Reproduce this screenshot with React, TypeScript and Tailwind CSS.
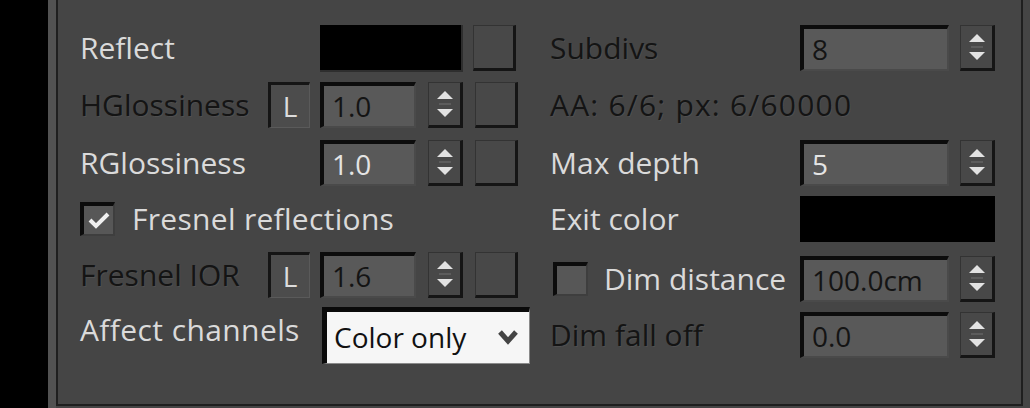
import React from "react";

// Enabled and disabled label styles, 3ds Max dark theme
const LIGHT = "text-[#dadada]";
const DIM = "text-[#141414] [text-shadow:1px_1px_0_rgba(255,255,255,0.06)]";

function Spinner() {
    return (
        <div className="w-[35px] h-[46px] flex flex-col items-center justify-center gap-[3px] border-l border-t border-[#333] border-r-[3px] border-b-[3px] border-r-[#151515] border-b-[#151515] bg-[#484848]">
            <svg width="18" height="10" viewBox="0 0 18 10">
                <polygon points="9,1 17,9 1,9" fill="#e2e2e2" />
            </svg>
            <div className="w-[12px] h-[2px] bg-[#5c5c5c]" />
            <svg width="18" height="10" viewBox="0 0 18 10">
                <polygon points="1,1 17,1 9,9" fill="#e2e2e2" />
            </svg>
        </div>
    );
}

function Field({ value, dim, w = "w-[96px]" }: { value: string; dim?: boolean; w?: string }) {
    return (
        <div
            className={`${w} h-[46px] flex items-center pl-[8px] bg-[#595959] border-t-[4px] border-l-[4px] border-[#0c0c0c] border-r-2 border-b-2 border-r-[#4a4a4a] border-b-[#4a4a4a] text-[28px] leading-none ${dim ? "text-[#141414]" : "text-[#e4e4e4]"}`}
        >
            {value}
        </div>
    );
}

function MapButton() {
    return <div className="w-[43px] h-[46px] bg-[#484848] border-l border-t border-[#333] border-r-[3px] border-b-[3px] border-r-[#151515] border-b-[#151515]" />;
}

function LButton() {
    return (
        <div className="w-[42px] h-[46px] flex items-center justify-center bg-[#4c4c4c] border-t-[3px] border-l-[3px] border-[#151515] border-r border-b border-r-[#5a5a5a] border-b-[#5a5a5a] text-[28px] leading-none text-[#dcdcdc]">
            L
        </div>
    );
}

function CheckBox({ checked }: { checked?: boolean }) {
    return (
        <div className="w-[35px] h-[34px] flex items-center justify-center bg-[#575757] border-t-[4px] border-l-[4px] border-[#0c0c0c] border-r-2 border-b-2 border-r-[#3e3e3e] border-b-[#3e3e3e]">
            {checked && (
                <svg width="22" height="18" viewBox="0 0 22 18">
                    <polyline points="2,9 8,15 20,3" fill="none" stroke="#f0f0f0" strokeWidth="4" />
                </svg>
            )}
        </div>
    );
}

export default function App() {
    return (
        <div className="flex w-[1030px] h-[408px] bg-[#454545] font-['Open_Sans',sans-serif] text-[30px] leading-none overflow-hidden">
            <div className="w-[48px] bg-black" />
            <div className="w-[8px] bg-[#525252]" />
            <div className="w-[967px] h-[406px] flex border-l-2 border-r-2 border-b-2 border-[#1f1f1f] pl-[22px]">
                {/* left column */}
                <div className="w-[470px] flex flex-col pt-[20px]">
                    <div className="h-[56px] flex items-center">
                        <span className={`w-[240px] ${LIGHT}`}>Reflect</span>
                        <div className="w-[143px] h-[47px] bg-black border-b-2 border-r-2 border-[#2e2e2e]" />
                        <div className="ml-[10px]">
                            <MapButton />
                        </div>
                    </div>
                    <div className="h-[58px] flex items-center">
                        <span className={`w-[188px] ${DIM}`}>HGlossiness</span>
                        <LButton />
                        <div className="ml-[10px] flex items-center gap-[12px]">
                            <Field value="1.0" dim />
                            <Spinner />
                            <MapButton />
                        </div>
                    </div>
                    <div className="h-[58px] flex items-center">
                        <span className={`w-[240px] ${LIGHT}`}>RGlossiness</span>
                        <div className="flex items-center gap-[12px]">
                            <Field value="1.0" />
                            <Spinner />
                            <MapButton />
                        </div>
                    </div>
                    <div className="h-[54px] flex items-center gap-[17px]">
                        <CheckBox checked />
                        <span className={`${LIGHT} tracking-[0.3px]`}>Fresnel reflections</span>
                    </div>
                    <div className="h-[58px] flex items-center">
                        <span className={`w-[188px] ${DIM}`}>Fresnel IOR</span>
                        <LButton />
                        <div className="ml-[10px] flex items-center gap-[12px]">
                            <Field value="1.6" dim />
                            <Spinner />
                            <MapButton />
                        </div>
                    </div>
                    <div className="h-[62px] flex items-center">
                        <span className={`w-[242px] mb-[10px] tracking-[0.4px] ${LIGHT}`}>Affect channels</span>
                        <div className="w-[208px] h-[57px] flex items-center justify-between pl-[7px] pr-[10px] bg-[#f6f6f6] border-t-[5px] border-l-[5px] border-[#0a0a0a] border-r border-b border-r-[#8a8a8a] border-b-[#8a8a8a] text-[28px] text-[#111]">
                            <span>Color only</span>
                            <svg width="22" height="16" viewBox="0 0 22 16">
                                <polyline points="3,3 11,12 19,3" fill="none" stroke="#444" strokeWidth="5" />
                            </svg>
                        </div>
                    </div>
                </div>
                {/* right column */}
                <div className="flex-1 flex flex-col pt-[20px]">
                    <div className="h-[56px] flex items-center">
                        <span className={`w-[250px] ${DIM}`}>Subdivs</span>
                        <div className="flex items-center gap-[11px]">
                            <Field value="8" dim w="w-[149px]" />
                            <Spinner />
                        </div>
                    </div>
                    <div className="h-[58px] flex items-center">
                        <span className={`${DIM} tracking-[1.2px]`}>AA: 6/6; px: 6/60000</span>
                    </div>
                    <div className="h-[58px] flex items-center">
                        <span className={`w-[250px] ${LIGHT}`}>Max depth</span>
                        <div className="flex items-center gap-[11px]">
                            <Field value="5" w="w-[149px]" />
                            <Spinner />
                        </div>
                    </div>
                    <div className="h-[54px] flex items-center">
                        <span className={`w-[250px] ${LIGHT}`}>Exit color</span>
                        <div className="w-[195px] h-[46px] bg-black" />
                    </div>
                    <div className="h-[58px] flex items-center pt-[8px]">
                        <div className="w-[250px] flex items-center gap-[16px] pl-[3px]">
                            <CheckBox />
                            <span className={LIGHT}>Dim distance</span>
                        </div>
                        <div className="flex items-center gap-[11px]">
                            <Field value="100.0cm" dim w="w-[149px]" />
                            <Spinner />
                        </div>
                    </div>
                    <div className="h-[62px] flex items-center">
                        <span className={`w-[250px] ${DIM}`}>Dim fall off</span>
                        <div className="flex items-center gap-[11px]">
                            <Field value="0.0" dim w="w-[149px]" />
                            <Spinner />
                        </div>
                    </div>
                </div>
            </div>
        </div>
    );
}
